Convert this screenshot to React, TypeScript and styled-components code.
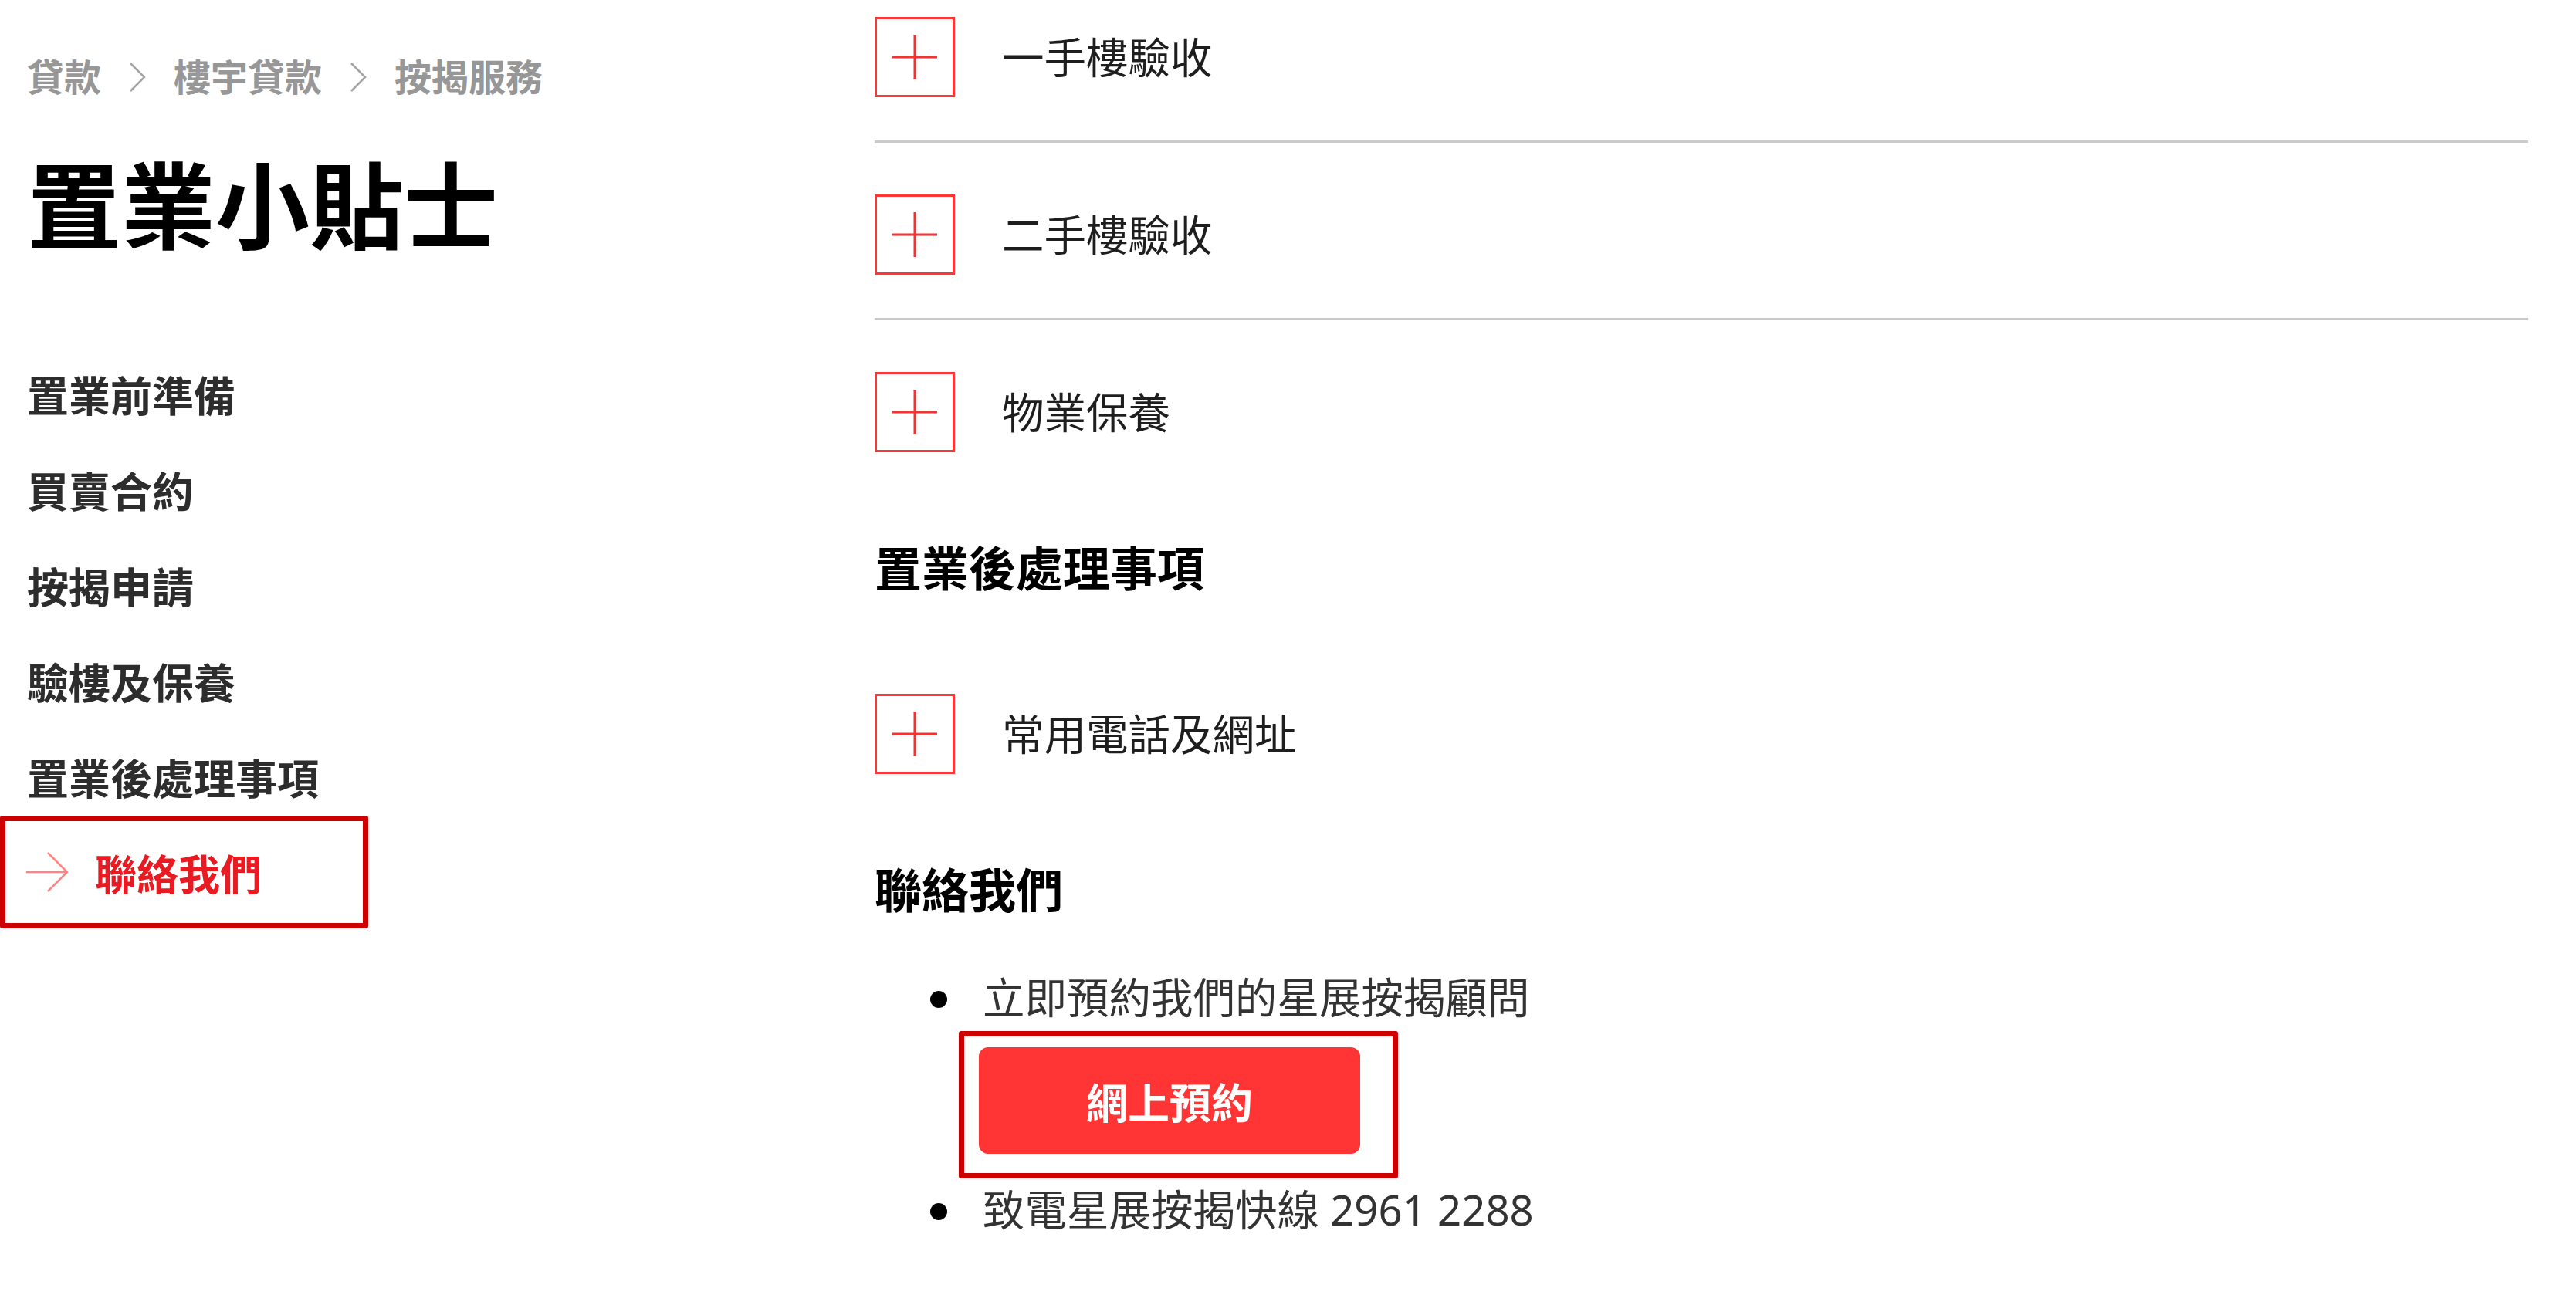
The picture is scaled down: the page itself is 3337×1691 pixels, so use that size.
import React from 'react';
import styled, { createGlobalStyle, css } from 'styled-components';

const GlobalStyle = createGlobalStyle`
  html, body {
    margin: 0;
    padding: 0;
    background: #fff;
  }
  body {
    font-family: "Noto Sans", "Noto Sans CJK TC", sans-serif;
    color: #333;
  }
  * {
    box-sizing: border-box;
  }
`;

type accordionType = {
  title: string
  lead?: boolean
}

const crumbs = ['貸款', '樓宇貸款', '按揭服務'];

const navItems = [
  { title: '置業前準備' },
  { title: '買賣合約' },
  { title: '按揭申請' },
  { title: '驗樓及保養' },
  { title: '置業後處理事項' },
  { title: '聯絡我們', active: true },
];

const inspection: accordionType[] = [
  { title: '一手樓驗收', lead: true },
  { title: '二手樓驗收' },
  { title: '物業保養' },
];

const afterPurchase: accordionType[] = [{ title: '常用電話及網址' }];

const ChevronIcon = () => (
  <Chevron viewBox="0 0 24 40">
    <path d="M3 2 L21 20 L3 38" />
  </Chevron>
);

const ArrowIcon = () => (
  <Arrow viewBox="0 0 56 52">
    <path d="M1 26 H54 M29 1 L54 26 L29 51" />
  </Arrow>
);

const PlusIcon = () => (
  <Plus viewBox="0 0 58 58">
    <path d="M0 29 H58 M29 0 V58" />
  </Plus>
);

const AccordionGroup = (props: { items: accordionType[] }) => {
  return (
    <Accordion>
      {props.items.map((item) => (
        <AccItem key={item.title} $lead={item.lead}>
          <PlusBox>
            <PlusIcon />
          </PlusBox>
          <AccLabel>{item.title}</AccLabel>
        </AccItem>
      ))}
    </Accordion>
  );
};

export default function App() {
  return (
    <>
      <GlobalStyle />
      <Page>
        <Sidebar>
          <Breadcrumb>
            {crumbs.map((c, i) => (
              <React.Fragment key={c}>
                {i > 0 && <ChevronIcon />}
                <Crumb>{c}</Crumb>
              </React.Fragment>
            ))}
          </Breadcrumb>
          <Title>置業小貼士</Title>
          <NavList>
            {navItems.map((item) => (
              <NavItem key={item.title} $active={item.active}>
                {item.active && <ArrowIcon />}
                {item.title}
              </NavItem>
            ))}
          </NavList>
        </Sidebar>

        <Main>
          <AccordionGroup items={inspection} />
          <SectionTitle>置業後處理事項</SectionTitle>
          <AccordionGroup items={afterPurchase} />
          <SectionTitle>聯絡我們</SectionTitle>
          <Bullets>
            <BulletItem>
              <Dot />
              <BulletBody>
                立即預約我們的星展按揭顧問
                <Highlight>
                  <BookButton>網上預約</BookButton>
                </Highlight>
              </BulletBody>
            </BulletItem>
            <BulletItem>
              <Dot />
              <BulletBody>致電星展按揭快線 2961 2288</BulletBody>
            </BulletItem>
          </Bullets>
        </Main>
      </Page>
    </>
  );
}

const Page = styled.div`
  display: grid;
  grid-template-columns: 1133px 1fr;
  padding-right: 62px;
  min-height: 1691px;
`;

const Sidebar = styled.aside`
  display: flex;
  flex-direction: column;
`;

const Breadcrumb = styled.nav`
  display: flex;
  align-items: center;
  height: 135px;
  padding: 65px 0 0 35px;
  font-size: 48px;
  line-height: 70px;
  font-weight: 700;
  color: #979797;
`;

const Crumb = styled.span`
  white-space: nowrap;
`;

const Chevron = styled.svg`
  width: 24px;
  height: 40px;
  margin: 0 35px;
  fill: none;
  stroke: #a3a3a3;
  stroke-width: 2.5;
`;

const Title = styled.h1`
  margin: 44px 0 0;
  padding-left: 35px;
  font-size: 122px;
  line-height: 174px;
  font-weight: 700;
  color: #000;
`;

const NavList = styled.ul`
  list-style: none;
  margin: 95px 0 0;
  padding: 0;
  display: flex;
  flex-direction: column;
`;

const NavItem = styled.li<{ $active?: boolean }>`
  display: flex;
  align-items: center;
  height: 124px;
  padding-left: 35px;
  font-size: 54px;
  font-weight: 700;
  color: #2d2d2d;

  ${(p) =>
    p.$active &&
    css`
      width: 477px;
      height: 146px;
      margin: -11px 0;
      padding-left: 26px;
      border: 7px solid #cc0000;
      border-radius: 3px;
      color: #ea1a22;
    `}
`;

const Arrow = styled.svg`
  width: 56px;
  height: 52px;
  margin-right: 34px;
  fill: none;
  stroke: #ff8585;
  stroke-width: 2.5;
`;

const Main = styled.main`
  display: flex;
  flex-direction: column;
`;

const Accordion = styled.div`
  display: flex;
  flex-direction: column;
`;

const AccItem = styled.div<{ $lead?: boolean }>`
  display: flex;
  align-items: center;
  gap: 61px;
  padding: ${(p) => (p.$lead ? '22px' : '67px')} 0 56px;

  &:not(:last-child) {
    border-bottom: 3px solid #cacaca;
  }
`;

const PlusBox = styled.span`
  flex-shrink: 0;
  width: 104px;
  height: 104px;
  display: flex;
  align-items: center;
  justify-content: center;
  border: 3px solid #ff3636;
`;

const Plus = styled.svg`
  width: 58px;
  height: 58px;
  fill: none;
  stroke: #ff2e2e;
  stroke-width: 3;
`;

const AccLabel = styled.span`
  font-size: 54.5px;
  line-height: 1;
  color: #1e1e1e;
`;

const SectionTitle = styled.h2`
  margin: 50px 0;
  font-size: 61px;
  line-height: 90px;
  font-weight: 700;
  color: #000;
`;

const Bullets = styled.ul`
  list-style: none;
  margin: 0;
  padding: 3px 0 0 72px;
  font-size: 54.5px;
  line-height: 81px;
  color: #333;
`;

const BulletItem = styled.li`
  display: grid;
  grid-template-columns: 22px 1fr;
  column-gap: 46px;
  align-items: start;
`;

const Dot = styled.span`
  width: 22px;
  height: 22px;
  margin-top: 32px;
  border-radius: 50%;
  background: #000;
`;

const BulletBody = styled.div`
  display: flex;
  flex-direction: column;
  align-items: flex-start;
`;

const Highlight = styled.div`
  margin: 3px 0 0 -31px;
  padding: 14px 42px 25px 19px;
  border: 7px solid #cc0000;
  border-radius: 3px;
`;

const BookButton = styled.button`
  display: flex;
  align-items: center;
  justify-content: center;
  width: 494px;
  height: 138px;
  padding: 0;
  border: none;
  border-radius: 12px;
  background: #ff3434;
  color: #fff;
  font-family: inherit;
  font-size: 54px;
  font-weight: 700;
  cursor: pointer;
`;
